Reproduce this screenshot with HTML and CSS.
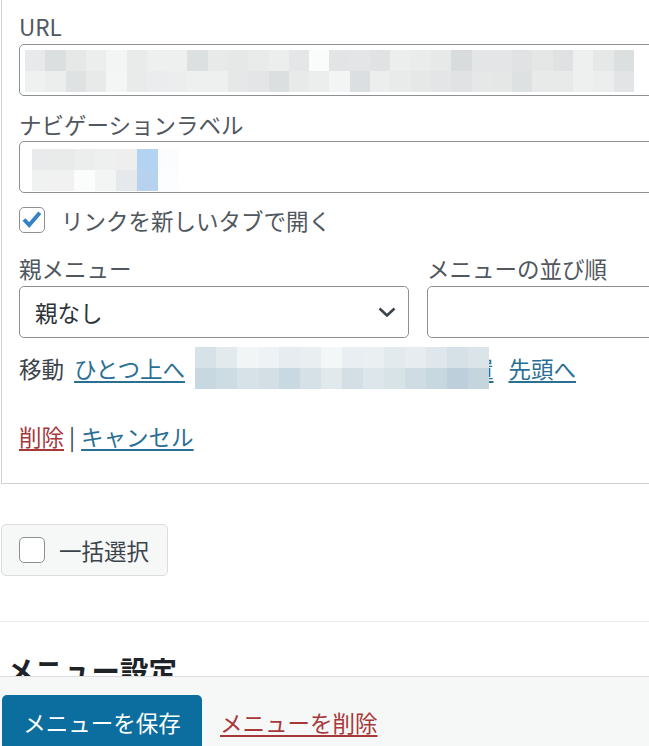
FILE: index.html
```html
<!DOCTYPE html>
<html lang="ja">
<head>
<meta charset="utf-8">
<title>メニュー</title>
<link rel="stylesheet" href="styles.css">
</head>
<body>
<div class="page">
  <div class="card">
    <div class="field">
      <div class="lbl">URL</div>
      <div class="input input-url"><div class="mosaic mosaic-url"></div></div>
    </div>
    <div class="field field-gap">
      <div class="lbl">ナビゲーションラベル</div>
      <div class="input input-nav"><div class="mosaic mosaic-nav"></div></div>
    </div>
    <div class="check-row">
      <span class="cb"><svg class="tick" viewBox="0 0 26 26" width="26" height="26"><path d="M5 12.5 L10.2 18 L20.8 5.8" fill="none" stroke="#3582c4" stroke-width="4"/></svg></span>
      <span class="check-text">リンクを新しいタブで開く</span>
    </div>
    <div class="row2">
      <div class="col-parent">
        <div class="lbl">親メニュー</div>
        <div class="select"><span>親なし</span><svg class="chev" viewBox="0 0 18 10" width="18" height="10"><polyline points="1.5,1.5 9,8.5 16.5,1.5" fill="none" stroke="#3c434a" stroke-width="2.6"/></svg></div>
      </div>
      <div class="col-order">
        <div class="lbl">メニューの並び順</div>
        <div class="input input-order"></div>
      </div>
    </div>
    <div class="move-row">
      <span class="move-label">移動</span>
      <a class="link link-up" href="#">ひとつ上へ</a>
      <div class="mosaic mosaic-move"></div>
      <a class="link link-hidden" href="#">置</a>
      <a class="link link-top" href="#">先頭へ</a>
    </div>
    <div class="actions">
      <a class="link link-red" href="#">削除</a><span class="sep-bar">|</span><a class="link" href="#">キャンセル</a>
    </div>
  </div>
  <div class="bulk">
    <span class="cb"></span>
    <span class="bulk-text">一括選択</span>
  </div>
  <div class="divider"></div>
  <h2 class="heading">メニュー設定</h2>
</div>
<div class="footer">
  <a class="btn-primary" href="#">メニューを保存</a>
  <a class="link link-red footer-delete" href="#">メニューを削除</a>
</div>
</body>
</html>
```
FILE: styles.css
```css
html, body {
  margin: 0;
  padding: 0;
  background: #ffffff;
  overflow: hidden;
}
body {
  font-family: "Noto Sans CJK JP", "Noto Sans", sans-serif;
  font-size: 22.5px;
  color: #3c434a;
  width: 649px;
  height: 746px;
}
.page {
  width: 649px;
  overflow: hidden;
}
.card {
  width: 800px;
  margin-left: 1px;
  border-left: 1px solid #d0d1d4;
  border-bottom: 1px solid #d0d1d4;
  padding: 11px 0 32px 17px;
  box-sizing: border-box;
}
.lbl {
  line-height: 30px;
  height: 30px;
  color: #50575e;
  white-space: nowrap;
}
.field:first-child .input {
  margin-top: 3px;
}
.field-gap {
  margin-top: 13px;
}
.input {
  margin-top: 2px;
  height: 52px;
  box-sizing: border-box;
  border: 1px solid #8c8f94;
  border-radius: 5px;
  background: #fff;
  display: flex;
  align-items: flex-start;
}
.input-url {
  padding: 5px 0 0 5px;
}
.input-nav {
  padding: 7px 0 0 12px;
}
.mosaic {
  height: 42px;
  flex: none;
}
.mosaic-url {
  width: 609px;
  background:
    linear-gradient(90deg,
      #e8e9ea 0 20px, #dcdfe0 20px 41px, #e6e8e8 41px 61px, #eceeee 61px 81px, #f3f4f4 81px 102px,
      #e9ebeb 102px 122px, #eef0f0 122px 142px, #eef0f0 142px 162px, #dde0e1 162px 183px, #e8eaea 183px 203px,
      #e6e8e8 203px 223px, #e9ebeb 223px 244px, #eceeee 244px 264px, #e4e6e7 264px 284px, #fafbfb 284px 304px,
      #e2e4e5 304px 325px, #e3e5e6 325px 345px, #e0e2e3 345px 365px, #eceeee 365px 386px, #eaecec 386px 406px,
      #e7e9e9 406px 426px, #d9dcdd 426px 447px, #e3e5e6 447px 467px, #e3e5e6 467px 487px, #e0e2e3 487px 507px,
      #e5e7e7 507px 528px, #dfe1e2 528px 548px, #eef0f0 548px 568px, #e6e8e8 568px 589px, #dcdfe0 589px 609px)
      top left / 100% 50% no-repeat,
    linear-gradient(90deg,
      #eff0f0 0 20px, #eceeee 20px 41px, #dfe2e2 41px 61px, #e8eaea 61px 81px, #f4f5f5 81px 102px,
      #e9ebeb 102px 122px, #eaeced 122px 142px, #eceeee 142px 162px, #eef0f0 162px 183px, #eef0f0 183px 203px,
      #e6e8e8 203px 223px, #e3e5e6 223px 244px, #dcdfe0 244px 264px, #e8eaea 264px 284px, #eceeee 284px 304px,
      #f3f4f4 304px 325px, #dcdfe1 325px 345px, #eceeee 345px 365px, #e9ebeb 365px 386px, #e6e8e8 386px 406px,
      #e3e5e6 406px 426px, #e0e2e3 426px 447px, #e6e8e8 447px 467px, #e5e7e7 467px 487px, #dee1e2 487px 507px,
      #e8eaea 507px 528px, #e8eaea 528px 548px, #eef0f0 548px 568px, #eceeed 568px 589px, #e2e4e5 589px 609px)
      bottom left / 100% 50% no-repeat;
}
.mosaic-nav {
  width: 147px;
  background:
    linear-gradient(90deg,
      #e9eaeb 0 21px, #e9eaea 21px 42px, #eceded 42px 63px, #eeefef 63px 84px,
      #eeeeef 84px 105px, #b4d3f3 105px 126px, #fafcfe 126px 147px)
      top left / 100% 50% no-repeat,
    linear-gradient(90deg,
      #f0f1f1 0 21px, #f1f1f2 21px 42px, #fbfcfc 42px 63px, #f3f4f4 63px 84px,
      #e6e9eb 84px 105px, #b6d2ef 105px 126px, #fcfdfe 126px 147px)
      bottom left / 100% 50% no-repeat;
}
.check-row {
  margin-top: 14px;
  height: 26px;
  display: flex;
  align-items: center;
}
.cb {
  width: 26px;
  height: 26px;
  box-sizing: border-box;
  border: 1px solid #8c8f94;
  border-radius: 5px;
  background: #fff;
  flex: none;
  position: relative;
}
.tick {
  position: absolute;
  left: -1px;
  top: -1px;
}
.check-text {
  margin-left: 16px;
  color: #50575e;
  line-height: 26px;
  white-space: nowrap;
}
.row2 {
  margin-top: 20px;
  display: flex;
  gap: 18px;
}
.col-parent {
  width: 390px;
  flex: none;
}
.col-order {
  flex: 1;
}
.select,
.input-order {
  margin-top: 3px;
}
.select {
  height: 52px;
  box-sizing: border-box;
  border: 1px solid #8c8f94;
  border-radius: 5px;
  background: #fff;
  display: flex;
  align-items: center;
  justify-content: space-between;
  padding: 0 12px 0 15px;
  color: #2c3338;
}
.chev {
  display: block;
}
.move-row {
  margin-top: 9px;
  height: 42px;
  display: flex;
  align-items: center;
  white-space: nowrap;
}
.move-label {
  color: #3c434a;
}
.link {
  color: #2a6f94;
  text-decoration: underline;
  text-underline-offset: 3px;
  text-decoration-thickness: 2px;
}
.link-red {
  color: #a8373a;
}
.link-up {
  margin-left: 10px;
}
.mosaic-move {
  margin-left: 10px;
  width: 294px;
  position: relative;
  z-index: 1;
  background:
    linear-gradient(90deg,
      #d7e2e8 0 21px, #e3eaee 21px 42px, #f2f5f6 42px 63px, #eef2f4 63px 84px, #e6ecef 84px 105px,
      #e9eef1 105px 126px, #f4f7f8 126px 147px, #e8eef1 147px 168px, #eaf0f2 168px 189px, #e3eaee 189px 210px,
      #e6ecef 210px 231px, #dfe7ec 231px 252px, #d5e1e7 252px 273px, #dbe4e9 273px 294px)
      top left / 100% 50% no-repeat,
    linear-gradient(90deg,
      #c8d8e0 0 21px, #cddbe2 21px 42px, #d6e2e7 42px 63px, #d3dfe5 63px 84px, #c9d9e1 84px 105px,
      #d6e1e7 105px 126px, #e2e9ed 126px 147px, #d3dfe5 147px 168px, #dde6eb 168px 189px, #d8e3e8 189px 210px,
      #cfdce3 210px 231px, #c8d8e0 231px 252px, #bccfda 252px 273px, #c4d5de 273px 294px)
      bottom left / 100% 50% no-repeat;
}
.link-hidden {
  margin-left: -18px;
}
.link-top {
  margin-left: 15px;
}
.actions {
  margin-top: 32px;
  height: 30px;
  line-height: 30px;
  white-space: nowrap;
}
.sep-bar {
  margin: 0 6px 0 5px;
  color: #3c434a;
}
.bulk {
  margin-top: 40px;
  margin-left: 1px;
  width: 167px;
  height: 52px;
  box-sizing: border-box;
  border: 1px solid #dcdcde;
  border-radius: 5px;
  background: #f6f7f7;
  display: flex;
  align-items: center;
  padding-left: 17px;
}
.bulk-text {
  margin-left: 14px;
  color: #3c434a;
  white-space: nowrap;
}
.divider {
  margin-top: 45px;
  height: 1px;
  background: #ebebec;
}
.heading {
  margin: 31px 0 0 6px;
  font-size: 28.5px;
  font-weight: 700;
  line-height: 34px;
  color: #1d2327;
  white-space: nowrap;
}
.footer {
  position: fixed;
  left: 0;
  right: 0;
  bottom: 0;
  height: 70px;
  box-sizing: border-box;
  border-top: 1px solid #dcdcde;
  background: #f6f7f7;
  padding: 18px 0 0 2px;
  display: flex;
  align-items: flex-start;
  overflow: hidden;
}
.btn-primary {
  width: 200px;
  height: 54px;
  flex: none;
  background: #0c6e9e;
  color: #ffffff;
  border-radius: 5px 5px 0 0;
  text-align: center;
  line-height: 54px;
  text-decoration: none;
  white-space: nowrap;
}
.footer-delete {
  margin-left: 18px;
  line-height: 54px;
  white-space: nowrap;
}
```
